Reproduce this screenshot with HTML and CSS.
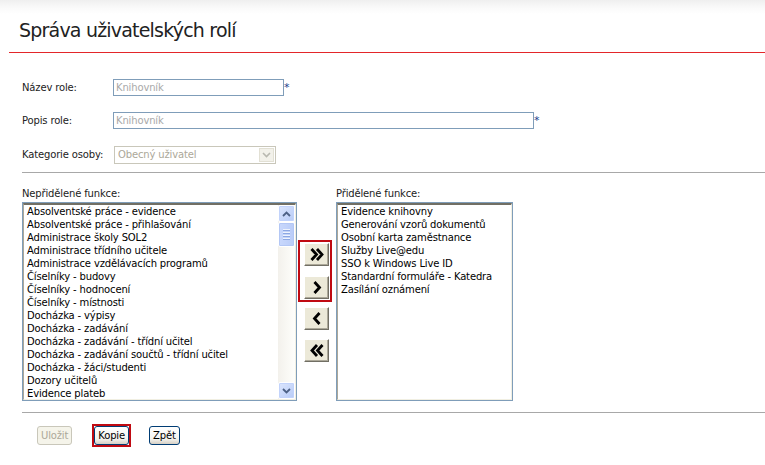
FILE: index.html
```html
<!DOCTYPE html>
<html lang="cs">
<head>
<meta charset="utf-8">
<title>Správa uživatelských rolí</title>
<link rel="stylesheet" href="styles.css">
</head>
<body>
<div class="header"><h1>Správa uživatelských rolí</h1></div>
<div class="redrule"></div>
<div class="form">
  <div class="row r1">
    <label class="lbl">Název role:</label>
    <div class="input w170">Knihovník</div><span class="req">*</span>
  </div>
  <div class="row r2">
    <label class="lbl">Popis role:</label>
    <div class="input w420">Knihovník</div><span class="req">*</span>
  </div>
  <div class="row r3">
    <label class="lbl">Kategorie osoby:</label>
    <div class="select"><span>Obecný uživatel</span><span class="ddbtn"><svg width="9" height="6" viewBox="0 0 9 6"><path d="M1 1 L4.5 4.5 L8 1" fill="none" stroke="#b8b8b0" stroke-width="1.6"/></svg></span></div>
  </div>
  <div class="grayrule"></div>
  <div class="lists">
    <div class="col">
      <div class="caption">Nepřidělené funkce:</div>
      <div class="listbox left">
        <ul>
          <li>Absolventské práce - evidence</li>
          <li>Absolventské práce - přihlašování</li>
          <li>Administrace školy SOL2</li>
          <li>Administrace třídního učitele</li>
          <li>Administrace vzdělávacích programů</li>
          <li>Číselníky - budovy</li>
          <li>Číselníky - hodnocení</li>
          <li>Číselníky - místnosti</li>
          <li>Docházka - výpisy</li>
          <li>Docházka - zadávání</li>
          <li>Docházka - zadávání - třídní učitel</li>
          <li>Docházka - zadávání součtů - třídní učitel</li>
          <li>Docházka - žáci/studenti</li>
          <li>Dozory učitelů</li>
          <li>Evidence plateb</li>
        </ul>
        <div class="scrollbar">
          <div class="sbtn"><svg width="9" height="6" viewBox="0 0 9 6"><path d="M1 5 L4.5 1.5 L8 5" fill="none" stroke="#4d6185" stroke-width="1.8"/></svg></div>
          <div class="thumb"><span></span><span></span><span></span><span></span></div>
          <div class="track"></div>
          <div class="sbtn"><svg width="9" height="6" viewBox="0 0 9 6"><path d="M1 1 L4.5 4.5 L8 1" fill="none" stroke="#4d6185" stroke-width="1.8"/></svg></div>
        </div>
      </div>
    </div>
    <div class="movers">
      <div class="focusbox">
        <button class="mv" type="button"><svg width="14" height="13" viewBox="0 0 14 13"><path d="M1.5 1 L6.5 6.5 L1.5 12 M7 1 L12 6.5 L7 12" fill="none" stroke="#000" stroke-width="2.8"/></svg></button>
        <button class="mv" type="button"><svg width="14" height="13" viewBox="0 0 14 13"><path d="M4.5 1 L9.5 6.5 L4.5 12" fill="none" stroke="#000" stroke-width="2.8"/></svg></button>
      </div>
      <button class="mv loose" type="button"><svg width="14" height="13" viewBox="0 0 14 13"><path d="M9.5 1 L4.5 6.5 L9.5 12" fill="none" stroke="#000" stroke-width="2.8"/></svg></button>
      <button class="mv loose" type="button"><svg width="14" height="13" viewBox="0 0 14 13"><path d="M12.5 1 L7.5 6.5 L12.5 12 M7 1 L2 6.5 L7 12" fill="none" stroke="#000" stroke-width="2.8"/></svg></button>
    </div>
    <div class="col">
      <div class="caption">Přidělené funkce:</div>
      <div class="listbox right">
        <ul>
          <li>Evidence knihovny</li>
          <li>Generování vzorů dokumentů</li>
          <li>Osobní karta zaměstnance</li>
          <li>Služby Live@edu</li>
          <li>SSO k Windows Live ID</li>
          <li>Standardní formuláře - Katedra</li>
          <li>Zasílání oznámení</li>
        </ul>
      </div>
    </div>
  </div>
  <div class="grayrule bottom"></div>
  <div class="actions">
    <button class="btn disabled" type="button">Uložit</button>
    <span class="redfocus"><button class="btn" type="button">Kopie</button></span>
    <button class="btn" type="button">Zpět</button>
  </div>
</div>
</body>
</html>
```
FILE: styles.css
```css
html, body {
  margin: 0;
  padding: 0;
  background: #fff;
}
body {
  font-family: Tahoma, "DejaVu Sans", "Liberation Sans", sans-serif;
  font-size: 10px;
  letter-spacing: -0.15px;
  color: #000;
  width: 765px;
  height: 465px;
  overflow: hidden;
}
.header {
  height: 52px;
  background: linear-gradient(#efefef 0, #fafafa 8px, #fff 14px);
  padding-left: 19px;
  box-sizing: border-box;
}
.header h1 {
  margin: 0;
  padding-top: 17px;
  font-family: "DejaVu Sans", sans-serif;
  font-weight: normal;
  font-size: 19px;
  letter-spacing: -0.8px;
  color: #222;
  line-height: 26px;
}
.redrule {
  margin-left: 9px;
  height: 1px;
  background: #e3262a;
}
.form {
  padding-left: 22px;
}
.row {
  display: flex;
  align-items: center;
  height: 17px;
  white-space: nowrap;
}
.r1 { margin-top: 26px; }
.r2 { margin-top: 16px; }
.r3 { margin-top: 17px; }
.lbl {
  width: 91px;
  flex: none;
  color: #222;
}
.input {
  box-sizing: border-box;
  height: 17px;
  border: 1px solid #7f9db9;
  color: #a9a9a9;
  padding-left: 2px;
  line-height: 15px;
}
.w170 { width: 171px; }
.w420 { width: 421px; }
.req {
  color: #1b3f8b;
  font-size: 11px;
  margin-left: 0;
  align-self: flex-start;
  line-height: 14px;
  padding-top: 2px;
}
.select {
  box-sizing: border-box;
  margin-left: 1px;
  width: 162px;
  height: 18px;
  border: 1px solid #c9c7ba;
  display: flex;
  align-items: center;
  justify-content: space-between;
  color: #aca899;
  padding-left: 3px;
}
.ddbtn {
  width: 15px;
  height: 14px;
  margin-right: 1px;
  background: #f2f1ea;
  border: 1px solid #e2e0d4;
  box-sizing: border-box;
  display: flex;
  align-items: center;
  justify-content: center;
}
.grayrule {
  height: 2px;
  background: #a8a8a8;
  margin-top: 9px;
  transform: scaleY(0.5);
  transform-origin: top;
}
.lists {
  display: flex;
  margin-top: 10px;
}
.col {
  display: flex;
  flex-direction: column;
}
.caption {
  color: #222;
  height: 18px;
  box-sizing: border-box;
  padding-top: 3px;
  line-height: 13px;
}
.listbox {
  box-sizing: border-box;
  border: 1px solid #7f9db9;
  height: 199px;
  display: flex;
  position: relative;
  overflow: hidden;
}
.listbox::before {
  content: "";
  position: absolute;
  inset: 0;
  border-top: 2px solid #716f64;
  border-left: 1px solid #aca899;
  border-right: 1px solid #f1efe2;
  border-bottom: 1px solid #f1efe2;
  pointer-events: none;
}
.listbox.left { width: 275px; }
.listbox.right { width: 177px; }
.listbox ul {
  list-style: none;
  margin: 0;
  padding: 2px 0 0 4px;
  flex: 1;
  white-space: nowrap;
  overflow: hidden;
}
.listbox li {
  height: 13px;
  line-height: 13px;
  color: #000;
}
.scrollbar {
  width: 17px;
  margin: 2px 1px 1px 0;
  display: flex;
  flex-direction: column;
  background: linear-gradient(90deg, #f3f1ec, #fefefb);
}
.sbtn {
  height: 17px;
  box-sizing: border-box;
  border: 1px solid #fff;
  border-radius: 2px;
  background: linear-gradient(135deg, #dce6fd, #b7cbf7);
  display: flex;
  align-items: center;
  justify-content: center;
  box-shadow: inset 0 0 0 1px #c2d3fb;
}
.thumb {
  height: 25px;
  box-sizing: border-box;
  border: 1px solid #fff;
  border-radius: 2px;
  background: linear-gradient(90deg, #c9d8fc, #b9ccf8);
  box-shadow: inset 0 0 0 1px #b3c7f5;
  display: flex;
  flex-direction: column;
  align-items: center;
  justify-content: center;
  gap: 1px;
}
.thumb span {
  width: 7px;
  height: 1px;
  background: #eef3fd;
  border-bottom: 1px solid #8ca7e3;
}
.track { flex: 1; }
.movers {
  width: 39px;
  display: flex;
  flex-direction: column;
  align-items: flex-start;
  padding-top: 56px;
  padding-left: 1px;
  box-sizing: border-box;
}
.focusbox {
  box-sizing: border-box;
  width: 34px;
  height: 62px;
  border: 2px solid #c00a12;
  display: flex;
  flex-direction: column;
  align-items: flex-start;
  justify-content: space-between;
  padding: 1px 0 1px 4px;
  margin-bottom: 5px;
}
.mv {
  box-sizing: border-box;
  width: 25px;
  height: 23px;
  padding: 0;
  margin: 0;
  background: #ece9d8;
  border: 1px solid;
  border-color: #fff #716f64 #716f64 #fff;
  box-shadow: inset -1px -1px 0 #aca899;
  display: flex;
  align-items: center;
  justify-content: center;
}
.mv.loose { margin-bottom: 9px; margin-left: 6px; }
.grayrule.bottom { margin-top: 11px; }
.actions {
  display: flex;
  align-items: center;
  margin-top: 10px;
  padding-left: 15px;
}
.btn {
  box-sizing: border-box;
  height: 19px;
  padding: 0 3px;
  font-family: inherit;
  font-size: 10px;
  letter-spacing: -0.15px;
  color: #000;
  border: 1px solid #003c74;
  border-radius: 3px;
  background: linear-gradient(#fff, #f4f3ee 70%, #d6d0c5);
  line-height: 16px;
}
.btn.disabled {
  color: #aca899;
  border-color: #c9c7ba;
  background: #f5f4ea;
}
.redfocus {
  display: inline-flex;
  border: 2px solid #c00a12;
  margin-left: 20px;
  margin-right: 18px;
}
```
